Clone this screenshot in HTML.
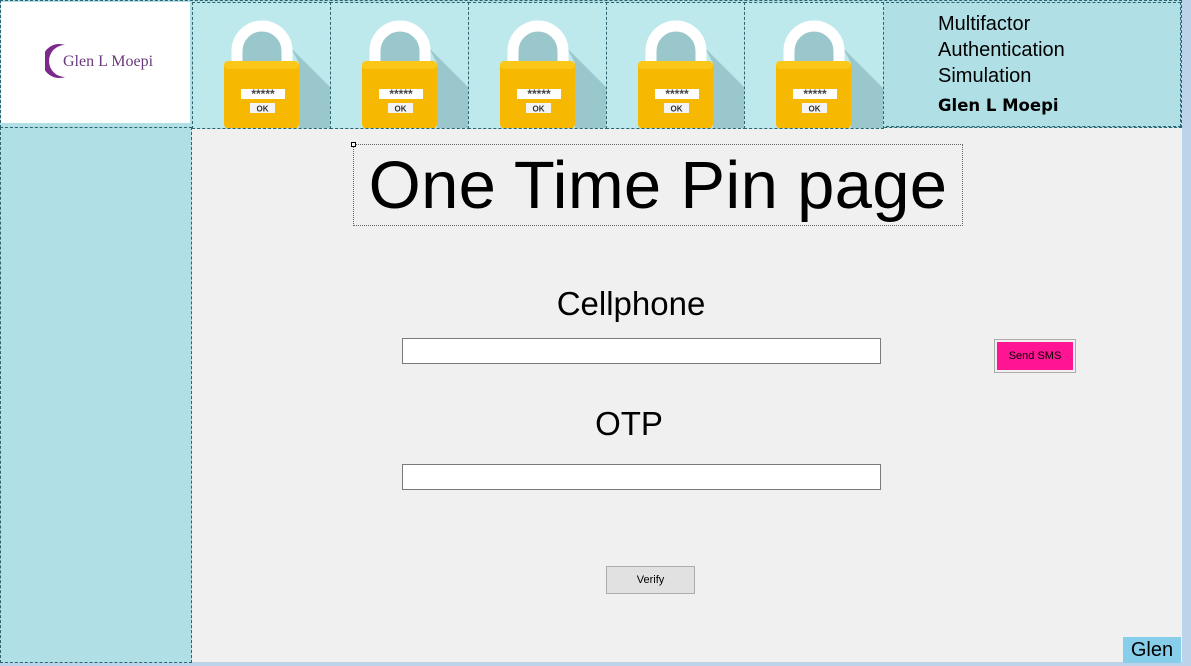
<!DOCTYPE html>
<html><head><style>
body{margin:0;width:1191px;height:666px;overflow:hidden;background:#bcd4ea;font-family:"Liberation Sans",sans-serif;position:relative}
.a{position:absolute;box-sizing:border-box}
.cell{position:absolute;top:2px;width:138px;height:125px;background:#bde9ec;border:1px dashed #2d6470;overflow:hidden}
</style></head><body>
<div class="a" style="left:0;top:0;width:1182px;height:662px;background:#f0f0f0"></div>
<div class="a" style="left:0;top:0;width:1182px;height:128px;background:#b0dfe5;border:1px dashed #2d6470"></div>
<div class="a" style="left:1px;top:2px;width:189px;height:121px;background:#fff"></div>
<svg class="a" style="left:45px;top:42px" width="130" height="40"><path d="M20 3 A17 17 0 1 0 20 35 A14 14 0 1 1 20 3Z" fill="#7b2a8c"/><text x="18" y="24" font-family="Liberation Serif" font-size="16" fill="#6b3a7a">Glen L Moepi</text></svg>
<div class="a" style="left:0;top:127px;width:192px;height:536px;background:#b0dfe5;border:1px dashed #2d6470"></div>
<div class="a" style="left:881px;top:2px;width:300px;height:125px;background:#b0dfe5;border:1px dashed #2d6470"></div>
<div class="a" style="left:938px;top:11px;font-size:20px;line-height:26px;color:#000">Multifactor<br>Authentication<br>Simulation</div>
<div class="a" style="left:938px;top:96px;font-size:16.5px;font-weight:bold;font-family:'DejaVu Sans',sans-serif">Glen L Moepi</div>
<div id="locks"></div>
<script>
var h='';for(var i=0;i<5;i++){var x=192+i*138;h+='<div class="cell" style="left:'+x+'px"><svg width="138" height="126"><polygon points="98,45 138,85 138,126 106,126 106,60" fill="#9ac7cb"/><path d="M44 62 V48 A25 25 0 0 1 94 48 V62" fill="#9ac7cb" stroke="#fff" stroke-width="11"/><rect x="31" y="58" width="75" height="68" rx="5" fill="#f6b800"/><rect x="31" y="58" width="75" height="8" rx="4" fill="#fbc81a"/><rect x="48" y="86" width="44" height="10" fill="#fff"/><text x="70" y="95" font-size="12" font-weight="bold" text-anchor="middle" fill="#444">*****</text><rect x="57" y="100" width="25" height="10" fill="#f3f3f3"/><text x="69.5" y="108.5" font-size="8" font-weight="bold" text-anchor="middle" fill="#333">OK</text></svg></div>'}document.getElementById('locks').innerHTML=h;
</script>
<div class="a" style="left:353px;top:144px;width:610px;height:82px;border:1px dotted #666;font-size:67px;text-align:center;line-height:82px;letter-spacing:0.3px">One Time Pin page</div>
<div class="a" style="left:351px;top:142px;width:5px;height:5px;border:1px solid #000;background:#fff"></div>
<div class="a" style="left:402px;top:285px;width:458px;text-align:center;font-size:33px">Cellphone</div>
<div class="a" style="left:402px;top:405px;width:454px;text-align:center;font-size:33px">OTP</div>
<div class="a" style="left:402px;top:338px;width:479px;height:26px;background:#fff;border:1px solid #7a7a7a"></div>
<div class="a" style="left:402px;top:464px;width:479px;height:26px;background:#fff;border:1px solid #7a7a7a"></div>
<div class="a" style="left:994px;top:339px;width:82px;height:34px;border:1px solid #adadad;padding:2px"><div style="background:#ff1493;height:28px;font-size:11px;text-align:center;line-height:28px">Send SMS</div></div>
<div class="a" style="left:606px;top:566px;width:89px;height:28px;background:#e1e1e1;border:1px solid #adadad;font-size:11px;text-align:center;line-height:26px">Verify</div>
<div class="a" style="left:1123px;top:637px;width:58px;height:26px;background:#87ceeb;font-size:20px;text-align:center;line-height:26px">Glen</div>
</body></html>
